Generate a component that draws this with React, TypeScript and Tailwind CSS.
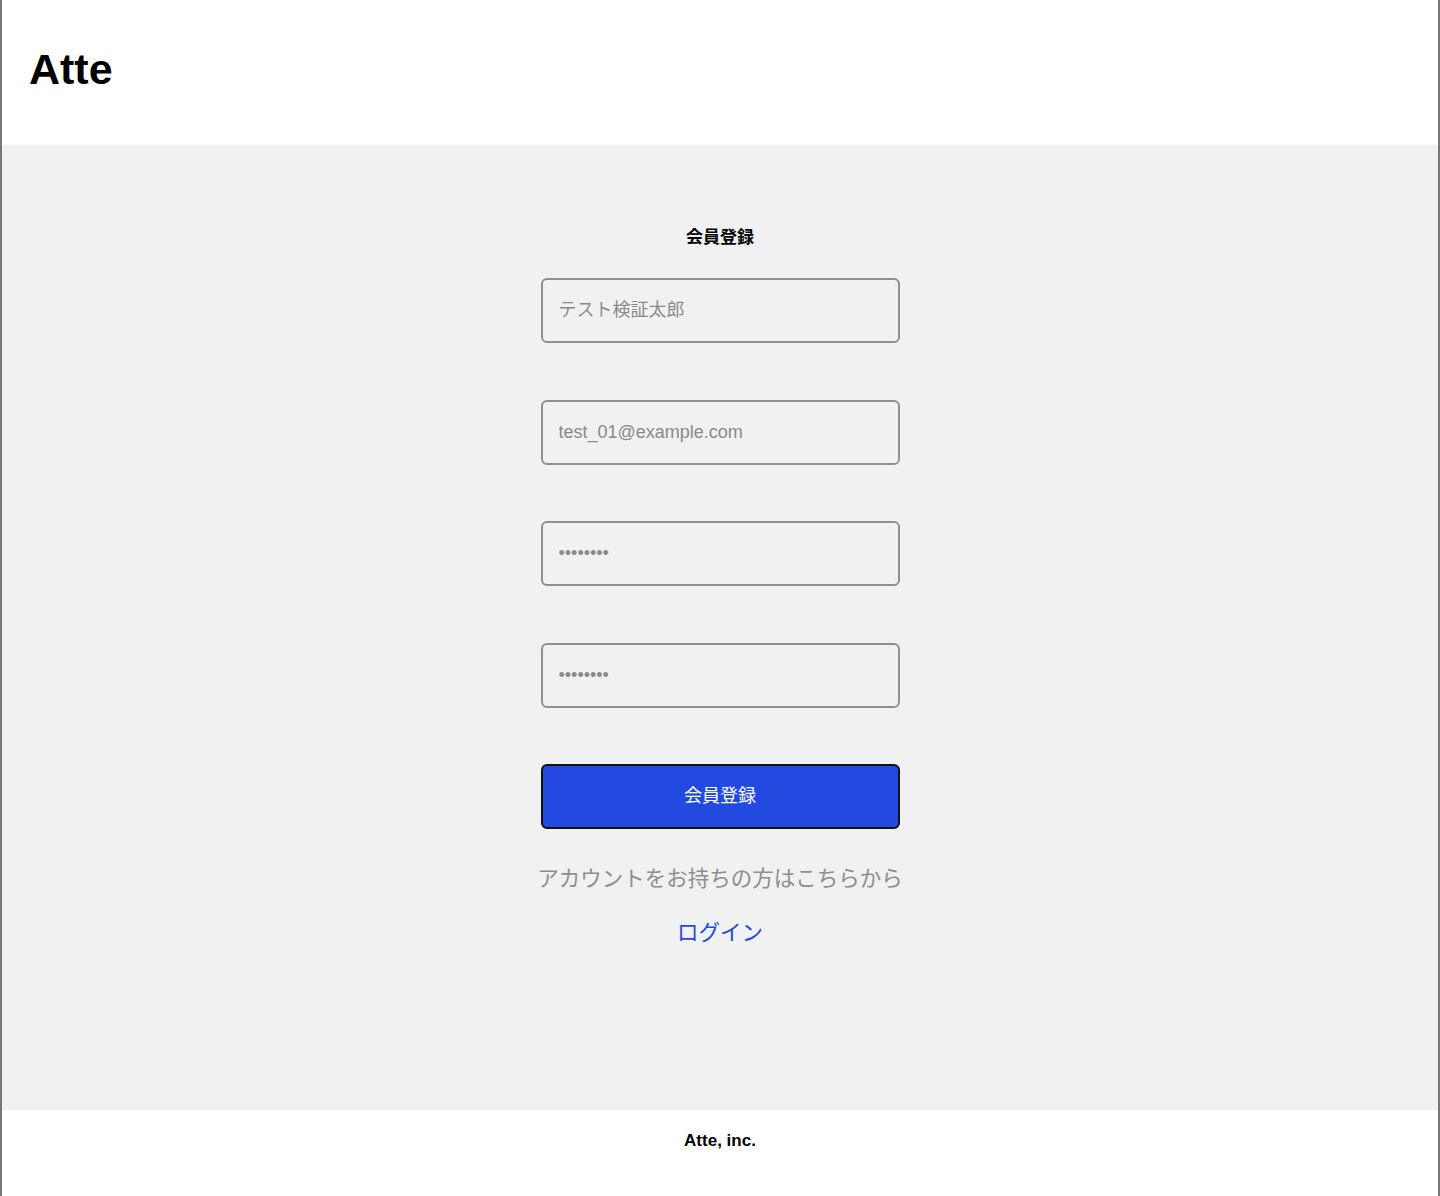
export default function App() {
  return (
    <div className="flex flex-col h-[1196px] w-full border-x-2 border-[#777777] bg-white text-black font-['Liberation_Sans','Noto_Sans_CJK_JP',sans-serif]">
      <header className="h-[145px] shrink-0 flex items-center px-[27px]">
        <h1 className="text-[43px] font-bold leading-none -mt-[6px]">Atte</h1>
      </header>

      <main className="flex-1 bg-[#f1f1f1] flex flex-col items-center pt-[80px]">
        <h2 className="text-[17px] font-bold leading-[26px]">会員登録</h2>
        <form className="mt-[27px] flex flex-col gap-[56.5px] w-[359px]">
          <input
            type="text"
            placeholder="テスト検証太郎"
            className="h-[65px] w-full rounded-[6px] border-2 border-[#8f8f8f] bg-transparent px-[16px] text-[18px] placeholder:text-[#8a8a8a] outline-none"
          />
          <input
            type="email"
            placeholder="test_01@example.com"
            className="h-[65px] w-full rounded-[6px] border-2 border-[#8f8f8f] bg-transparent px-[16px] text-[18px] placeholder:text-[#8a8a8a] outline-none"
          />
          <input
            type="password"
            placeholder="••••••••"
            className="h-[65px] w-full rounded-[6px] border-2 border-[#8f8f8f] bg-transparent px-[16px] text-[18px] placeholder:text-[#8a8a8a] outline-none"
          />
          <input
            type="password"
            placeholder="••••••••"
            className="h-[65px] w-full rounded-[6px] border-2 border-[#8f8f8f] bg-transparent px-[16px] text-[18px] placeholder:text-[#8a8a8a] outline-none"
          />
          <button
            type="button"
            className="h-[65px] w-full rounded-[6px] border-2 border-[#111111] bg-[#2249e0] text-white text-[18px]"
          >
            会員登録
          </button>
        </form>
        <p className="mt-[34px] text-[21.5px] leading-[32px] text-[#8e8e8e]">アカウントをお持ちの方はこちらから</p>
        <a href="#" className="mt-[22px] text-[21.5px] leading-[32px] text-[#2249e0]">ログイン</a>
      </main>

      <footer className="h-[86px] shrink-0 flex justify-center pt-[21px]">
        <p className="text-[17px] font-bold leading-[20px]">Atte, inc.</p>
      </footer>
    </div>
  );
}
